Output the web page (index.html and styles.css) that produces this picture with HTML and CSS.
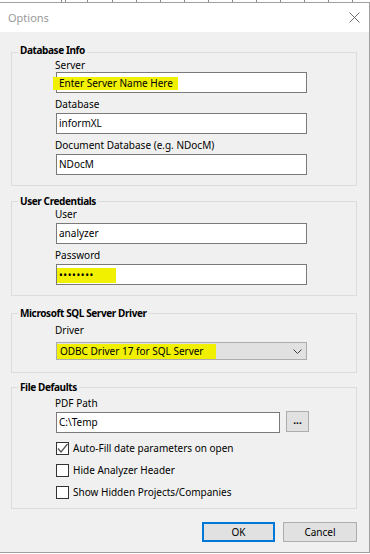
FILE: index.html
```html
<!DOCTYPE html>
<html lang="en">
<head>
    <meta charset="UTF-8">
    <meta name="viewport" content="width=device-width, initial-scale=1.0">
    <title>Options</title>
    <link rel="stylesheet" href="styles.css">
</head>
<body>
    <!-- sliver of the sheet behind the dialog -->
    <div class="ruler">
        <span style="width:62px"></span>
        <span style="width:4px"></span>
        <span style="width:22px"></span>
        <span style="width:25px"></span>
        <span style="width:24px"></span>
        <span style="width:24px"></span>
        <span style="width:24px"></span>
        <span style="width:24px"></span>
        <span style="width:24px"></span>
        <span style="width:24px"></span>
        <span style="width:24px"></span>
        <span style="width:24px"></span>
        <span style="width:24px"></span>
        <span style="width:24px"></span>
    </div>

    <div class="window">
        <div class="titlebar">
            <span class="title">Options</span>
            <svg class="close" width="11" height="11" viewBox="0 0 11 11">
                <path d="M0.5 0.5 L10.5 10.5 M10.5 0.5 L0.5 10.5" stroke="#6f6f6f" stroke-width="1" fill="none"/>
            </svg>
        </div>

        <div class="client">
            <!-- Database Info -->
            <div class="group">
                <div class="group-title group-title-db">Database Info</div>
                <div class="group-body group-db">
                    <div class="field field-server">
                        <label>Server</label>
                        <div class="textbox"><span class="hl hl-server">Enter Server Name Here</span></div>
                    </div>
                    <div class="field">
                        <label>Database</label>
                        <div class="textbox">informXL</div>
                    </div>
                    <div class="field">
                        <label>Document Database (e.g. NDocM)</label>
                        <div class="textbox">NDocM</div>
                    </div>
                </div>
            </div>

            <!-- User Credentials -->
            <div class="group group-user">
                <div class="group-title">User Credentials</div>
                <div class="group-body group-body-user">
                    <div class="field">
                        <label>User</label>
                        <div class="textbox">analyzer</div>
                    </div>
                    <div class="field">
                        <label>Password</label>
                        <div class="textbox"><span class="hl hl-pass"><span class="dots">&#8226;&#8226;&#8226;&#8226;&#8226;&#8226;&#8226;&#8226;</span></span></div>
                    </div>
                </div>
            </div>

            <!-- Driver -->
            <div class="group group-driver">
                <div class="group-title">Microsoft SQL Server Driver</div>
                <div class="group-body group-body-driver">
                    <div class="field">
                        <label class="label-driver">Driver</label>
                        <div class="select">
                            <span class="hl hl-driver">ODBC Driver 17 for SQL Server</span>
                            <svg width="9" height="5" viewBox="0 0 9 5">
                                <path d="M0.5 0.5 L4.5 4.5 L8.5 0.5" stroke="#404040" stroke-width="1" fill="none"/>
                            </svg>
                        </div>
                    </div>
                </div>
            </div>

            <!-- File Defaults -->
            <div class="group group-files">
                <div class="group-title">File Defaults</div>
                <div class="group-body group-body-files">
                    <div class="field">
                        <label>PDF Path</label>
                        <div class="path-row">
                            <div class="textbox textbox-path">C:\Temp</div>
                            <div class="btn btn-browse">...</div>
                        </div>
                    </div>
                    <div class="checks">
                        <div class="check">
                            <span class="box">
                                <svg width="11" height="11" viewBox="0 0 11 11">
                                    <path d="M1 5.5 L4 9 L10.5 1" stroke="#505050" stroke-width="1.2" fill="none"/>
                                </svg>
                            </span>
                            Auto-Fill date parameters on open
                        </div>
                        <div class="check"><span class="box"></span>Hide Analyzer Header</div>
                        <div class="check"><span class="box"></span>Show Hidden Projects/Companies</div>
                    </div>
                </div>
            </div>

            <div class="buttons">
                <div class="btn btn-ok">OK</div>
                <div class="btn btn-cancel">Cancel</div>
            </div>
        </div>
    </div>
</body>
</html>
```

FILE: styles.css
```css
* {
    margin: 0;
    padding: 0;
    box-sizing: border-box;
}

body {
    font-family: "Noto Sans", "Open Sans", sans-serif;
    font-size: 10px;
    color: #000;
    background: #fff;
    width: 370px;
    height: 554px;
    overflow: hidden;
}

.ruler {
    display: flex;
    height: 3px;
    border-bottom: 1px solid #a0a0a0;
}

.ruler span {
    border-right: 1px solid #8a8a8a;
}

.window {
    height: 550px;
    display: flex;
    flex-direction: column;
    border-right: 1px solid #a0a0a0;
    border-bottom: 1px solid #a0a0a0;
}

.titlebar {
    height: 29px;
    background: #fff;
    display: flex;
    align-items: center;
    justify-content: space-between;
    padding: 0 9px 0 8px;
}

.title {
    font-size: 11px;
    color: #9a9a9a;
}

.client {
    flex: 1;
    background: #f0f0f0;
    padding: 20px 12px 0 11px;
}

/* group boxes */
.group {
    border: 1px solid #dcdcdc;
}

.group-title {
    display: block;
    width: fit-content;
    line-height: 10px;
    margin: -6px 0 -4px 6px;
    padding: 0 2px;
    background: #f0f0f0;
    font-weight: bold;
    letter-spacing: -0.4px;
}

.group-title-db {
    margin-top: -8px;
    margin-bottom: -2px;
}

.group-body {
    display: flex;
    flex-direction: column;
    gap: 5px;
    padding-left: 44px;
}

.group-db {
    padding-top: 6px;
    padding-bottom: 10px;
}

.group-user {
    margin-top: 15px;
}

.group-body-user {
    padding-top: 6px;
    padding-bottom: 10px;
}

.group-driver {
    margin-top: 17px;
}

.group-body-driver {
    padding-top: 10px;
    padding-bottom: 12px;
}

.group-files {
    margin-top: 14px;
}

.group-body-files {
    padding-top: 9px;
    padding-bottom: 5px;
    gap: 4px;
}

/* fields */
.field label {
    display: block;
    line-height: 12px;
    margin: 0 0 3px -1px;
}

.field-server label {
    margin-bottom: 1px;
}

.field .label-driver {
    margin-bottom: 6px;
}

.textbox {
    width: 251px;
    height: 21px;
    border: 1px solid #7a7a7a;
    background: #fff;
    padding-left: 2px;
    line-height: 19px;
    white-space: nowrap;
}

.textbox-path {
    width: 224px;
}

.path-row {
    display: flex;
    gap: 6px;
}

.select {
    width: 251px;
    height: 18px;
    border: 1px solid #adadad;
    background: #e1e1e1;
    display: flex;
    align-items: center;
    justify-content: space-between;
    padding: 0 4px 0 3px;
    white-space: nowrap;
}

/* highlighter marks */
.hl {
    display: inline-block;
    background: #f0f000;
    vertical-align: middle;
}

.hl-server {
    height: 13px;
    line-height: 13px;
    margin-left: -6px;
    padding: 0 5px 0 6px;
}

.hl-pass {
    height: 15px;
    line-height: 15px;
    width: 59px;
    margin-left: -2px;
    padding-left: 2px;
}

.dots {
    letter-spacing: 0.6px;
    font-size: 10px;
}

.hl-driver {
    height: 15px;
    line-height: 15px;
    margin-left: -3px;
    padding: 0 12px 0 3px;
}

/* checkboxes */
.checks {
    display: flex;
    flex-direction: column;
}

.check {
    display: flex;
    align-items: center;
    gap: 4px;
    height: 22px;
}

.box {
    width: 13px;
    height: 13px;
    border: 1px solid #333;
    background: #fff;
    display: flex;
    align-items: center;
    justify-content: center;
}

/* buttons */
.btn {
    background: #e1e1e1;
    border: 1px solid #adadad;
    display: flex;
    align-items: center;
    justify-content: center;
}

.btn-browse {
    width: 23px;
    height: 21px;
    margin-top: -1px;
    font-weight: bold;
    line-height: 1;
    padding-bottom: 3px;
}

.buttons {
    display: flex;
    justify-content: flex-end;
    gap: 8px;
    margin-top: 13px;
}

.btn-ok {
    width: 73px;
    height: 20px;
    border: 2px solid #0078d7;
}

.btn-cancel {
    width: 74px;
    height: 20px;
}
```
